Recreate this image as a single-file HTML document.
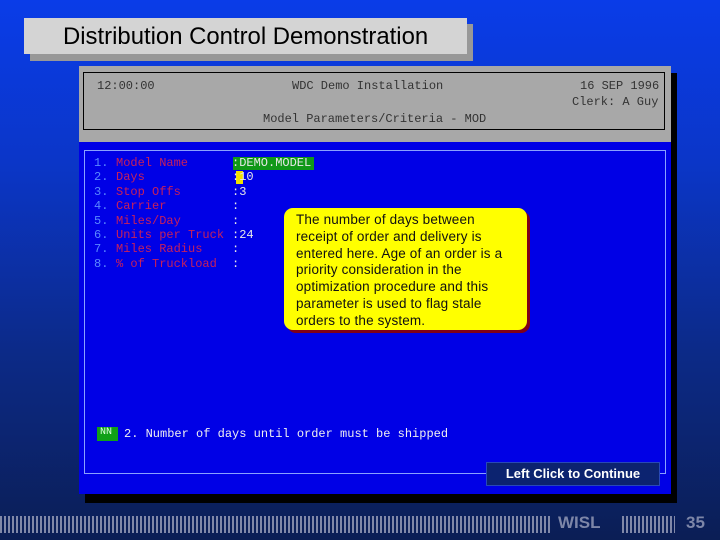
<!DOCTYPE html>
<html><head><meta charset="utf-8"><style>
*{margin:0;padding:0}
body{width:720px;height:540px;overflow:hidden;position:relative;background:linear-gradient(180deg,#0a3ce8 0%,#0b36c8 30%,#0c2a88 65%,#0b1e55 100%);font-family:"Liberation Sans",sans-serif}
.abs{position:absolute}
.mono{font-family:"Liberation Mono",monospace;font-size:12px;white-space:pre}
</style></head><body>
<div class="abs" style="left:30px;top:24px;width:443px;height:37px;background:#989898"></div>
<div class="abs" style="left:24px;top:18px;width:443px;height:36px;background:#d4d4d4;font-size:23.9px;line-height:37px;color:#000;padding-left:39px;box-sizing:border-box;white-space:nowrap">Distribution Control Demonstration</div>

<div class="abs" style="left:85px;top:73px;width:592px;height:430px;background:#000"></div>
<div class="abs" style="left:79px;top:66px;width:592px;height:76px;background:#a8a8a8"></div>
<div class="abs" style="left:83px;top:72px;width:582px;height:58px;border:1px solid #000;box-sizing:border-box"></div>
<div class="abs mono" style="left:97px;top:79px;color:#333">12:00:00</div>
<div class="abs mono" style="left:292px;top:79px;color:#333">WDC Demo Installation</div>
<div class="abs mono" style="left:580px;top:79px;color:#333">16 SEP 1996</div>
<div class="abs mono" style="left:572px;top:95px;color:#333">Clerk: A Guy</div>
<div class="abs mono" style="left:263px;top:112px;color:#333">Model Parameters/Criteria - MOD</div>

<div class="abs" style="left:79px;top:142px;width:592px;height:352px;background:#0000e6"></div>
<div class="abs" style="left:84px;top:150px;width:582px;height:324px;border:1px solid #8aa0ff;box-sizing:border-box"></div>

<div class="abs mono" style="left:94px;top:156px;line-height:14.4px;color:#5a88ff">1.
2.
3.
4.
5.
6.
7.
8.</div>
<div class="abs mono" style="left:116px;top:156px;line-height:14.4px;color:#c8205a">Model Name
Days
Stop Offs
Carrier
Miles/Day
Units per Truck
Miles Radius
% of Truckload</div>
<div class="abs" style="left:233px;top:157px;width:81px;height:13px;background:#109818"></div>
<div class="abs" style="left:236px;top:171px;width:7px;height:13px;background:#f0e000"></div>
<div class="abs mono" style="left:232px;top:156px;line-height:14.4px;color:#e8e8e8">:DEMO.MODEL
:10
:3
:
:
:24
:
:</div>

<div class="abs" style="left:287px;top:211px;width:243px;height:122px;background:#800018;border-radius:9px"></div>
<div class="abs" style="left:284px;top:208px;width:243px;height:122px;background:#ffff00;border-radius:9px;box-sizing:border-box;padding:4px 0 0 12px;font-size:13.5px;line-height:16.8px;color:#111;white-space:nowrap;letter-spacing:0.15px">The number of days between<br>receipt of order and delivery is<br>entered here. Age of an order is a<br>priority consideration in the<br>optimization procedure and this<br>parameter is used to flag stale<br>orders to the system.</div>

<div class="abs" style="left:97px;top:427px;width:21px;height:14px;background:#10a018"></div>
<div class="abs mono" style="left:100px;top:427px;color:#e0ffe0;font-size:10px">NN</div>
<div class="abs mono" style="left:124px;top:427px;color:#f0f0f0">2. Number of days until order must be shipped</div>

<div class="abs" style="left:486px;top:462px;width:174px;height:24px;background:#0c2370;border:1px solid #2848b8;box-sizing:border-box;color:#fff;font-weight:bold;font-size:13px;line-height:22px;text-align:center">Left Click to Continue</div>

<div class="abs" style="left:0;top:516px;width:550px;height:17px;background:repeating-linear-gradient(90deg,#8088a8 0 2px,transparent 2px 4px)"></div>
<div class="abs" style="left:558px;top:513px;color:#7d86a8;font-weight:bold;font-size:17px">WISL</div>
<div class="abs" style="left:622px;top:516px;width:53px;height:17px;background:repeating-linear-gradient(90deg,#8088a8 0 2px,transparent 2px 4px)"></div>
<div class="abs" style="left:686px;top:513px;color:#7d86a8;font-weight:bold;font-size:17px">35</div>
</body></html>
